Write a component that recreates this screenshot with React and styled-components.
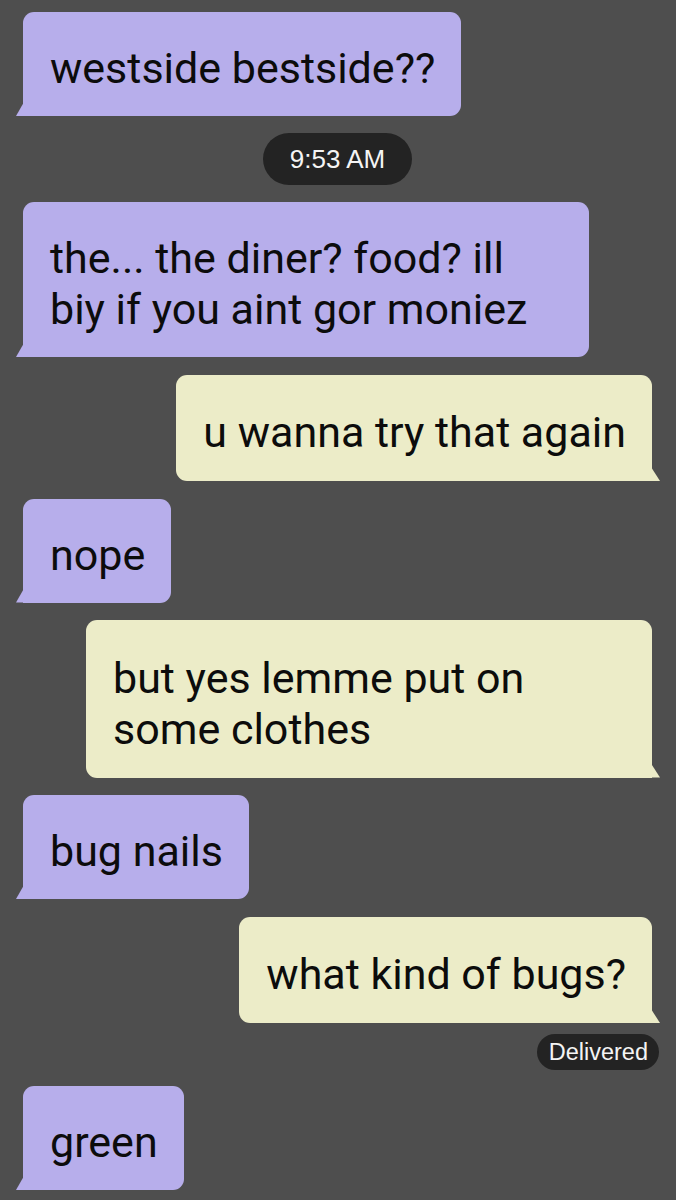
import React from "react";
import styled, { createGlobalStyle, css } from "styled-components";

const Global = createGlobalStyle`
  html, body { margin: 0; padding: 0; background: #4e4e4e; }
  body { font-family: Roboto, "Noto Sans", sans-serif; }
`;

const Thread = styled.div`
  display: flex;
  flex-direction: column;
  padding: 12px 24px 0 23px;
  gap: 17.5px;
  min-height: 1200px;
  box-sizing: border-box;
`;

const Bubble = styled.div`
  position: relative;
  width: fit-content;
  max-width: 566px;
  box-sizing: border-box;
  font-size: 43px;
  line-height: 51px;
  color: #0c0c0c;
  border-radius: 11px;
  ${(p) =>
    p.$out
      ? css`
          align-self: flex-end;
          padding: 32.5px 26px 23px 27px;
          background: #ececc8;
          border-bottom-right-radius: 0;
          &::after {
            content: "";
            position: absolute;
            right: -8px;
            bottom: 0;
            width: 9px;
            height: 14px;
            background: #ececc8;
            clip-path: polygon(0 0, 100% 100%, 0 100%);
          }
        `
      : css`
          align-self: flex-start;
          padding: 31px 26px 22px 27px;
          background: #b7aeeb;
          border-bottom-left-radius: 0;
          &::after {
            content: "";
            position: absolute;
            left: -7px;
            bottom: 0;
            width: 8px;
            height: 14px;
            background: #b7aeeb;
            clip-path: polygon(100% 0, 100% 100%, 0 100%);
          }
        `}
`;

const Pill = styled.div`
  font-family: "Liberation Sans", Arial, sans-serif;
  background: #232323;
  color: #f4f4f4;
  border-radius: 999px;
  width: fit-content;
  ${(p) =>
    p.$small
      ? css`
          align-self: flex-end;
          margin: -6.5px -7px -1.5px 0;
          font-size: 23.5px;
          line-height: 36px;
          padding: 0 11px 0 12px;
        `
      : css`
          align-self: center;
          font-size: 26px;
          line-height: 52px;
          padding: 0 27px;
          margin: -0.5px 0;
        `}
`;

export default function App() {
  return (
    <>
      <Global />
      <Thread>
        <Bubble>westside bestside??</Bubble>
        <Pill>9:53 AM</Pill>
        <Bubble>the... the diner? food? ill biy if you aint gor moniez</Bubble>
        <Bubble $out>u wanna try that again</Bubble>
        <Bubble>nope</Bubble>
        <Bubble $out>but yes lemme put on some clothes</Bubble>
        <Bubble>bug nails</Bubble>
        <Bubble $out>what kind of bugs?</Bubble>
        <Pill $small>Delivered</Pill>
        <Bubble>green</Bubble>
      </Thread>
    </>
  );
}
